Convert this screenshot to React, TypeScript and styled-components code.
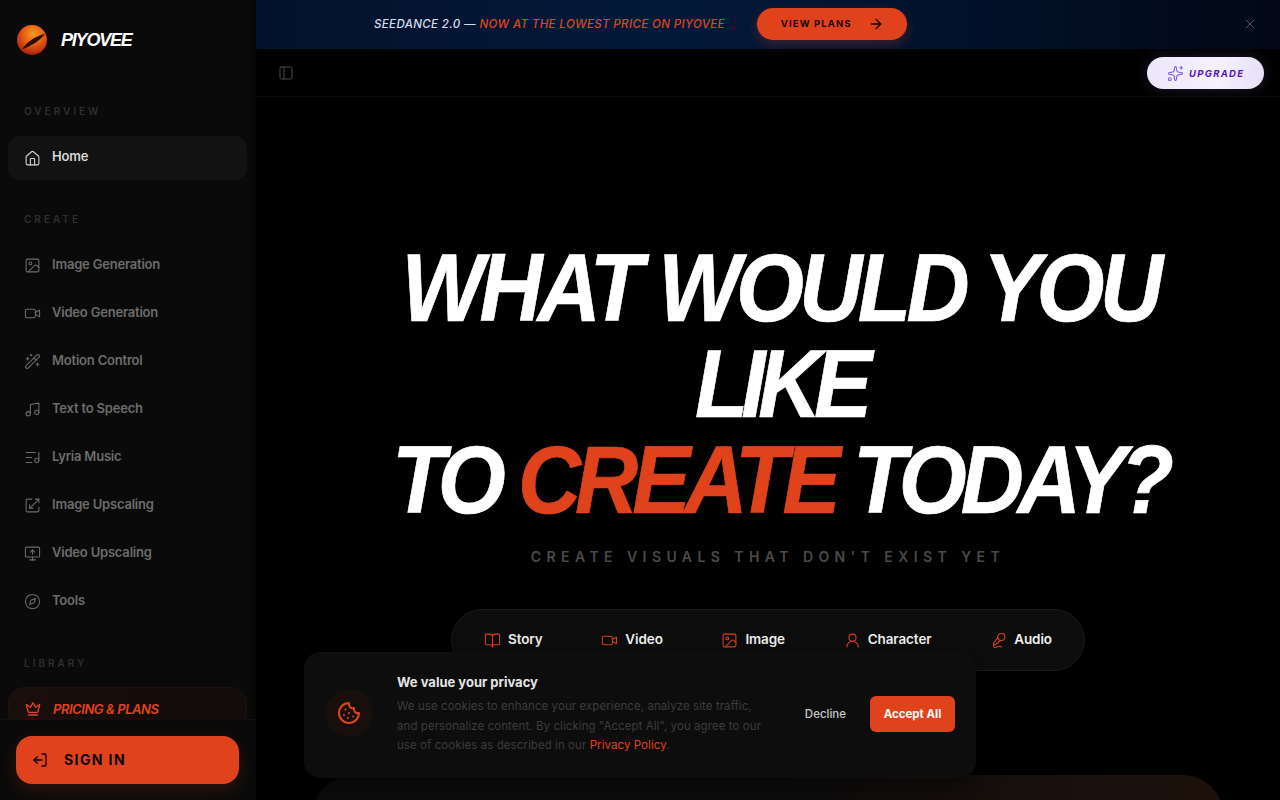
import React from "react";
import styled, { createGlobalStyle } from "styled-components";
import {
  ArrowRight, BookOpen, Compass, Cookie, Crown, House, Image as ImageIcon, ListMusic,
  LogOut, MicVocal, MonitorUp, Music, PanelLeft, Sparkles, UserRound, Video, WandSparkles, X,
} from "lucide-react";

const Global = createGlobalStyle`
  html, body { margin: 0; padding: 0; background: #000; height: 100%; overflow: hidden; }
  * { box-sizing: border-box; }
  body { font-family: Inter, "Liberation Sans", sans-serif; color: #fff; }
`;

const Page = styled.div`
  position: relative; display: flex; width: 1280px; height: 800px; overflow: hidden; background: #000;
`;
const Sidebar = styled.aside`
  width: 256px; flex: none; height: 800px; display: flex; flex-direction: column;
  background: #0a0a0a; box-shadow: inset -6px 0 6px -4px rgba(0,0,0,.55);
`;
const Brand = styled.div`
  height: 80px; flex: none; display: flex; align-items: center; gap: 14px; padding-left: 17px;
`;
const BrandName = styled.span`
  font: italic 700 18px "Liberation Sans", sans-serif; letter-spacing: -1.2px; color: #fff;
`;
const NavScroll = styled.div`
  flex: 1; min-height: 0; overflow: hidden; padding: 0 9px 0 8px;
`;
const SectionLabel = styled.div<{ $top: number; $bottom: number }>`
  margin: ${p => p.$top}px 0 ${p => p.$bottom}px 16px; height: 12px; line-height: 12px;
  font-size: 10px; font-weight: 600; letter-spacing: 3px; color: #2f2f2f;
`;
const NavItem = styled.div<{ $active?: boolean }>`
  height: 44px; margin-bottom: 4px; display: flex; align-items: center; gap: 11px; padding-left: 16px;
  border-radius: 12px; font-size: 13px; font-weight: 600; letter-spacing: -0.2px;
  background: ${p => (p.$active ? "#121212" : "transparent")};
  color: ${p => (p.$active ? "#d6d6d6" : "#6c6c6c")};
  svg { width: 17px; height: 17px; stroke-width: 1.5; flex: none; margin-top: ${p => (p.$active ? 0 : 1)}px; }
  span { margin-top: ${p => (p.$active ? -5 : -3)}px; }
`;
const PricingItem = styled.div`
  height: 44px; display: flex; align-items: center; gap: 12px; padding-left: 16px; width: 239px;
  border: 1px solid #1f1210; border-radius: 16px; background: linear-gradient(90deg, #1a0e0b, #120c0a);
  color: #e0431c; font-size: 13px; font-weight: 600; font-style: italic; letter-spacing: -0.45px;
  svg { width: 16px; height: 16px; stroke-width: 2; flex: none; }
`;
const SideFooter = styled.div`
  height: 81px; flex: none; padding: 16px 17px 16px 16px; background: #0a0a0a; border-top: 1px solid #111;
`;
const SignIn = styled.div`
  height: 48px; border-radius: 16px; background: #e0431c; color: #0c0604; display: flex; align-items: center;
  gap: 16px; padding-left: 16px; font-size: 14px; font-weight: 700; letter-spacing: 1.4px;
  box-shadow: 0 6px 18px rgba(224,67,28,.18);
  svg { width: 16px; height: 16px; stroke-width: 2; transform: scaleX(-1); }
  span { margin-top: -2px; }
`;
const Main = styled.main`
  flex: 1; min-width: 0; display: flex; flex-direction: column;
`;
const Banner = styled.div`
  position: relative; height: 49px; flex: none; display: flex; align-items: center; justify-content: flex-start;
  padding-left: 118px; gap: 32px;
  background: linear-gradient(90deg, #03122a 0%, #03193a 40%, #02112a 70%, #020815 100%);
`;
const BannerText = styled.div`
  font-size: 11.5px; font-weight: 500; font-style: italic; color: #d3deee; letter-spacing: 0.37px; margin-top: -2px;
  em { color: #e0431c; font-style: italic; }
`;
const PlansButton = styled.div`
  width: 150px; height: 32px; margin-top: -2px; border-radius: 16px; background: #e0431c; color: #1a0905;
  display: flex; align-items: center; gap: 16px; padding-left: 24px;
  font-size: 9.5px; font-weight: 700; letter-spacing: 1.1px; box-shadow: 0 4px 12px rgba(224,67,28,.28);
  svg { width: 16px; height: 16px; stroke-width: 2; }
`;
const CloseBtn = styled.div`
  position: absolute; right: 22px; top: 16px; width: 16px; height: 16px; color: #555d68; display: flex;
  svg { width: 16px; height: 16px; stroke-width: 1.5; }
`;
const TopBar = styled.div`
  height: 48px; flex: none; display: flex; align-items: center; justify-content: space-between;
  padding: 0 16px 0 22px; border-bottom: 1px solid #0b0b0b;
  > svg { width: 16px; height: 16px; color: #4a4a4a; stroke-width: 1.5; }
`;
const Upgrade = styled.div`
  width: 117px; height: 32px; margin-top: 1px; border-radius: 16px; display: flex; align-items: center; gap: 5px; padding-left: 20px;
  background: linear-gradient(100deg, #ece6fb, #f5f2fd 60%, #e6def8); color: #5a14c8;
  font-size: 9.5px; font-weight: 700; font-style: italic; letter-spacing: 1.3px;
  box-shadow: 0 0 14px rgba(180,150,255,.18);
  svg { width: 17px; height: 17px; stroke-width: 1.5; color: #7e5ad8; }
`;
const Hero = styled.section`
  flex: 1; min-height: 0; display: flex; flex-direction: column; align-items: center; padding-top: 143px;
`;
const Headline = styled.h1`
  margin: 0 0 0 24px; width: 900px; text-align: center; color: #fff; white-space: nowrap;
  font: italic 700 96px/96px "Liberation Sans", sans-serif;
  transform: scaleX(0.91); -webkit-text-stroke: 0.7px currentColor;
  em { color: #e0431c; font-style: italic; }
`;
const HeadLine = styled.span<{ $spacing: number }>`
  display: block; letter-spacing: ${p => p.$spacing}px;
`;
const Subtitle = styled.p`
  margin: 11px 0 0; height: 36px; line-height: 36px; font-size: 14px; font-weight: 600; letter-spacing: 5.43px; color: #4a4a4a;
`;
const Tabs = styled.div`
  margin-top: 34px; width: 634px; height: 62px; flex: none; display: flex; align-items: center; justify-content: space-between;
  padding: 0 32px; border-radius: 31px; background: #0d0d0d; border: 1px solid #1a1a1a;
`;
const Tab = styled.div`
  display: flex; align-items: center; gap: 7px; font-size: 13.5px; font-weight: 600; color: #f0f0f0; letter-spacing: -0.1px;
  svg { width: 17px; height: 17px; color: #d8431f; stroke-width: 1.5; }
  span { margin-top: -2px; }
`;
const LowerCard = styled.div`
  margin-top: 104px; margin-left: 0; width: 910px; height: 120px; flex: none; border-radius: 40px;
  background: linear-gradient(90deg, #0c0c0c 0%, #0c0c0c 50%, #1a100c 85%, #1e110c 100%);
`;
const CookieCard = styled.div`
  position: absolute; left: 304px; top: 652px; width: 672px; height: 126px; border-radius: 16px; background: #0d0d0d;
  display: flex; align-items: flex-start; padding: 21px 21px 0 21px;
  box-shadow: 0 8px 24px rgba(0,0,0,.5);
`;
const CookieIcon = styled.div`
  width: 48px; height: 48px; margin-top: 16px; flex: none; border-radius: 50%; background: #180f0c; color: #e0431c;
  display: flex; align-items: center; justify-content: center;
  svg { width: 24px; height: 24px; stroke-width: 2; }
`;
const CookieBody = styled.div`
  width: 372px; margin-left: 24px; flex: none;
`;
const CookieTitle = styled.div`
  font-size: 13px; line-height: 18px; font-weight: 700; color: #e4e4e4; margin-bottom: 6px;
`;
const CookieText = styled.p`
  margin: 0; font-size: 11.5px; line-height: 19.5px; color: #3c3c3c; letter-spacing: 0.07px;
  a { color: #e0431c; text-decoration: none; }
`;
const CookieActions = styled.div`
  display: flex; align-items: center; gap: 24px; margin: 23px 0 0 auto;
`;
const Decline = styled.span`
  font-size: 11.5px; font-weight: 500; color: #c8c8c8;
`;
const Accept = styled.div`
  width: 85px; height: 36px; border-radius: 6px; background: #e0431c; color: #fff; display: flex; align-items: center;
  justify-content: center; font-size: 11.5px; font-weight: 700;
`;

const Logo = () => (
  <svg width="30" height="30" viewBox="0 0 30 30">
    <defs>
      <radialGradient id="orb" cx="0.55" cy="0.3" r="0.75">
        <stop offset="0" stopColor="#f79a1e" />
        <stop offset="0.45" stopColor="#ea5e14" />
        <stop offset="0.85" stopColor="#b82c0e" />
        <stop offset="1" stopColor="#7d1e0a" />
      </radialGradient>
    </defs>
    <circle cx="15" cy="15" r="15" fill="url(#orb)" />
    <path d="M5 24.5 C10 17 17 12 28 8.5 C24 15 14 21 5 24.5Z" fill="#2a0e05" />
  </svg>
);

const UpscaleIcon = (props: React.SVGProps<SVGSVGElement>) => (
  <svg viewBox="0 0 24 24" fill="none" stroke="currentColor" strokeLinecap="round" strokeLinejoin="round" {...props}>
    <path d="M21 14v5a2 2 0 0 1-2 2H5a2 2 0 0 1-2-2V5a2 2 0 0 1 2-2h6" />
    <path d="M8 16 21 3" />
    <path d="M16 3h5v5" />
    <path d="M8 11v5h5" />
  </svg>
);

const navItems: [string, React.ElementType][] = [
  ["Image Generation", ImageIcon], ["Video Generation", Video], ["Motion Control", WandSparkles],
  ["Text to Speech", Music], ["Lyria Music", ListMusic], ["Image Upscaling", UpscaleIcon],
  ["Video Upscaling", MonitorUp], ["Tools", Compass],
];
const tabs: [string, React.ElementType][] = [
  ["Story", BookOpen], ["Video", Video], ["Image", ImageIcon], ["Character", UserRound], ["Audio", MicVocal],
];

export default function App() {
  return (
    <Page>
      <Global />
      <Sidebar>
        <Brand><Logo /><BrandName>PIYOVEE</BrandName></Brand>
        <NavScroll>
          <SectionLabel $top={25} $bottom={19}>OVERVIEW</SectionLabel>
          <NavItem $active><House /><span>Home</span></NavItem>
          <SectionLabel $top={33} $bottom={18}>CREATE</SectionLabel>
          {navItems.map(([label, Icon]) => (
            <NavItem key={label}><Icon /><span>{label}</span></NavItem>
          ))}
          <SectionLabel $top={34} $bottom={18}>LIBRARY</SectionLabel>
          <PricingItem><Crown /><span>PRICING &amp; PLANS</span></PricingItem>
        </NavScroll>
        <SideFooter><SignIn><LogOut /><span>SIGN IN</span></SignIn></SideFooter>
      </Sidebar>
      <Main>
        <Banner>
          <BannerText>SEEDANCE 2.0 — <em>NOW AT THE LOWEST PRICE ON PIYOVEE</em></BannerText>
          <PlansButton><span>VIEW PLANS</span><ArrowRight /></PlansButton>
          <CloseBtn><X /></CloseBtn>
        </Banner>
        <TopBar>
          <PanelLeft />
          <Upgrade><Sparkles /><span>UPGRADE</span></Upgrade>
        </TopBar>
        <Hero>
          <Headline>
            <HeadLine $spacing={-5.1}>WHAT WOULD YOU</HeadLine>
            <HeadLine $spacing={-8}>LIKE</HeadLine>
            <HeadLine $spacing={-6.6}>TO <em>CREATE</em> TODAY?</HeadLine>
          </Headline>
          <Subtitle>CREATE VISUALS THAT DON'T EXIST YET</Subtitle>
          <Tabs>
            {tabs.map(([label, Icon]) => (
              <Tab key={label}><Icon /><span>{label}</span></Tab>
            ))}
          </Tabs>
          <LowerCard />
        </Hero>
      </Main>
      <CookieCard>
        <CookieIcon><Cookie /></CookieIcon>
        <CookieBody>
          <CookieTitle>We value your privacy</CookieTitle>
          <CookieText>
            We use cookies to enhance your experience, analyze site traffic, and personalize content. By clicking "Accept All", you agree to our use of cookies as described in our <a>Privacy Policy</a>.
          </CookieText>
        </CookieBody>
        <CookieActions><Decline>Decline</Decline><Accept>Accept All</Accept></CookieActions>
      </CookieCard>
    </Page>
  );
}
